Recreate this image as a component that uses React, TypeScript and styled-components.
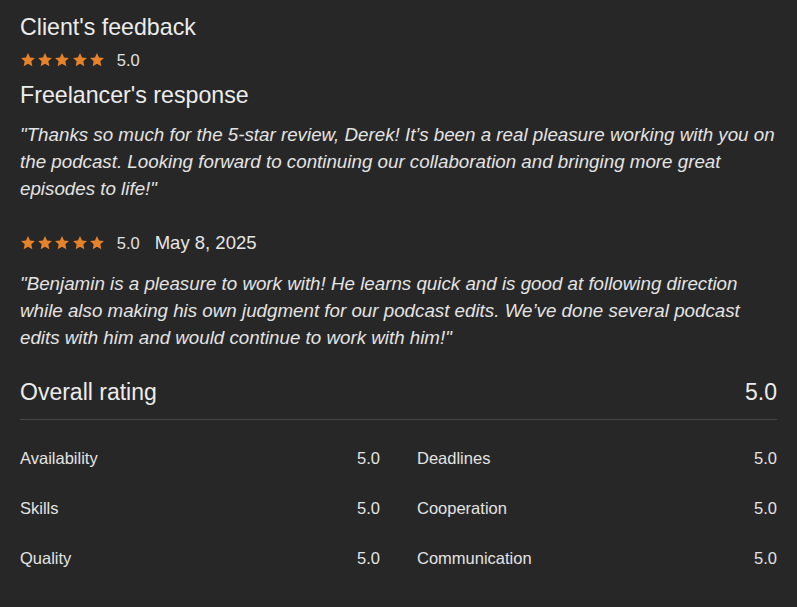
import styled, { createGlobalStyle } from "styled-components";

const GlobalStyle = createGlobalStyle`
  body {
    margin: 0;
    background-color: #272727;
    font-family: "Liberation Sans", Arial, sans-serif;
    color: #e6e6e6;
  }
`;

const Page = styled.div`
  padding: 11px 20px 20px;
  display: flex;
  flex-direction: column;
`;

const Heading = styled.h2<{ $top?: number }>`
  margin: ${(p) => p.$top ?? 0}px 0 0;
  font-size: 23.2px;
  line-height: 32px;
  font-weight: 400;
  color: #ececec;
`;

const RatingRow = styled.div<{ $top: number }>`
  margin-top: ${(p) => p.$top}px;
  display: flex;
  align-items: center;
  gap: 12px;
  height: 20px;
`;

const Stars = styled.div`
  display: flex;
  gap: 1.2px;
`;

const Score = styled.span`
  font-size: 16.5px;
  color: #e0e0e0;
`;

const DateText = styled.span`
  font-size: 18.5px;
  color: #e6e6e6;
  margin-left: 3px;
`;

const Quote = styled.p<{ $top: number }>`
  margin: ${(p) => p.$top}px 0 0;
  font-size: 18.75px;
  line-height: 27px;
  font-style: italic;
  color: #e3e3e3;
`;

const OverallRow = styled.div`
  margin-top: 25px;
  display: flex;
  justify-content: space-between;
  font-size: 23px;
  line-height: 32px;
  color: #ececec;
  padding-bottom: 11px;
  border-bottom: 1px solid #474747;
`;

const Breakdown = styled.div`
  margin-top: 13px;
  display: grid;
  grid-template-columns: 1fr 1fr;
  column-gap: 37px;
`;

const BreakdownRow = styled.div`
  display: flex;
  justify-content: space-between;
  align-items: center;
  height: 50px;
  font-size: 16.5px;
  color: #e3e3e3;
`;

const Star = () => (
  <svg width="16" height="16" viewBox="0 0 24 24">
    <path
      fill="#e5822a"
      d="M12 1.6l3.1 6.6 7.3.9-5.4 4.9 1.5 7.2L12 17.6l-6.5 3.6 1.5-7.2-5.4-4.9 7.3-.9z"
    />
  </svg>
);

const FiveStars = () => (
  <Stars>
    {[0, 1, 2, 3, 4].map((i) => (
      <Star key={i} />
    ))}
  </Stars>
);

const breakdown = [
  ["Availability", "5.0"],
  ["Deadlines", "5.0"],
  ["Skills", "5.0"],
  ["Cooperation", "5.0"],
  ["Quality", "5.0"],
  ["Communication", "5.0"],
];

export default function App() {
  return (
    <>
      <GlobalStyle />
      <Page>
        <Heading>Client's feedback</Heading>
        <RatingRow $top={7}>
          <FiveStars />
          <Score>5.0</Score>
        </RatingRow>
        <Heading $top={9}>Freelancer's response</Heading>
        <Quote $top={10}>
          "Thanks so much for the 5-star review, Derek! It’s been a real
          pleasure working with you on the podcast. Looking forward to
          continuing our collaboration and bringing more great episodes to
          life!"
        </Quote>
        <RatingRow $top={31}>
          <FiveStars />
          <Score>5.0</Score>
          <DateText>May 8, 2025</DateText>
        </RatingRow>
        <Quote $top={17}>
          "Benjamin is a pleasure to work with! He learns quick and is good at
          following direction while also making his own judgment for our
          podcast edits. We’ve done several podcast edits with him and would
          continue to work with him!"
        </Quote>
        <OverallRow>
          <span>Overall rating</span>
          <span>5.0</span>
        </OverallRow>
        <Breakdown>
          {breakdown.map(([label, value]) => (
            <BreakdownRow key={label}>
              <span>{label}</span>
              <span>{value}</span>
            </BreakdownRow>
          ))}
        </Breakdown>
      </Page>
    </>
  );
}
